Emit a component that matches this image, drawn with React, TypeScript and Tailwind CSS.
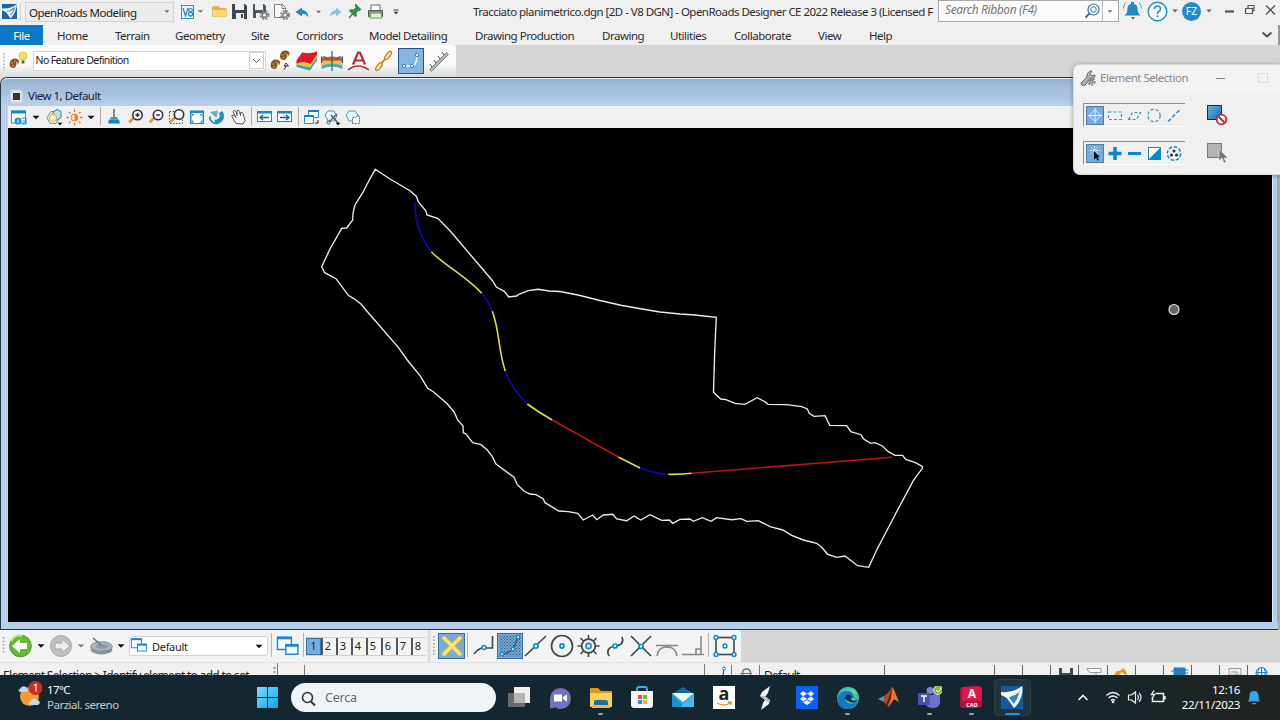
import type { ReactNode } from "react";

type IconProps = { x: number; y: number; w: number; h: number; children?: ReactNode; className?: string };

/* An icon slot: drawn in window coordinates, sized and placed by its flex row. */
function G({ x, y, w, h, children, className = "" }: IconProps) {
  return (
    <svg width={w} height={h} viewBox={`${x} ${y} ${w} ${h}`} fill="none" className={`block shrink-0 ${className}`}>
      {children}
    </svg>
  );
}

function Down({ x, y, s = 3, c = "#666" }: { x: number; y: number; s?: number; c?: string }) {
  return <path d={`M${x - s} ${y - s / 2}h${s * 2}l${-s} ${s}z`} fill={c} />;
}

function Gear({ x, y, r = 3 }: { x: number; y: number; r?: number }) {
  return (
    <g stroke="#7d8488">
      <circle cx={x} cy={y} r={r + 1} strokeWidth="2" strokeDasharray="2 1.2" />
      <circle cx={x} cy={y} r={r - 0.7} strokeWidth="1.6" fill="#f0f0f0" />
    </g>
  );
}

function TitleBar() {
  return (
    <div className="flex h-[25px] shrink-0 items-start bg-[#f0f0f0]">
      <G x={0} y={0} w={25} h={25}>
        <rect x="2" y="4" width="15" height="15" fill="#1a67a8" />
        <path d="M2 8.500q9 .5 15-4.500-1 9-6.500 14.500l-3-4.500q-1.500-3-5.500-3.500z" fill="#f6fafc" />
        <path d="M7 11.500q4-.5 8-4-2 5-4.500 7.500" stroke="#5596c4" strokeWidth="1.100" />
        <path d="M20.500 4v17" stroke="#d2d2d2" />
      </G>
      <div className="mt-[2px] flex h-[20px] w-[149px] shrink-0 items-center justify-between border border-[#d2d2d2] bg-[#ececec] pl-[3px] pr-[3px]">
        <span className="whitespace-nowrap pt-[1px] text-[11.5px] leading-[17px] tracking-[-0.52px] text-[#222]">OpenRoads Modeling</span>
        <G x={0} y={0} w={6} h={4}><Down x={3} y={1.5} s={2.5} /></G>
      </div>
      <G x={174} y={0} w={34} h={25}>
        <rect x="181.5" y="5.5" width="12" height="13" fill="#eaf6fd" stroke="#2e8fc4" />
        <path d="M183 8l2.500 8 2.500-8M190.500 8.500a1.800 1.800 0 0 1 0 3.600 2 2 0 0 1 0 4 2 2 0 0 1 0-4 1.800 1.800 0 0 1 0-3.600" stroke="#1687c7" strokeWidth="1.200" />
        <Down x={200.500} y={11.500} s={2.500} />
      </G>
      <G x={208} y={0} w={22} h={25}>
        <path d="M212 7.500q0-1.500 1.500-1.500h5l1.500 2h5q2 0 2 2v5q0 2-2 2h-11q-2 0-2-2z" fill="#e7b04c" />
        <path d="M212.500 10h14v4.500q0 2-2 2h-10q-2 0-2-2z" fill="#fbd879" />
      </G>
      <G x={230} y={0} w={20} h={25}>
        <path d="M232 4h13l2 2v13h-15z" fill="#41474c" />
        <path d="M235 4h9v6h-9zM236 13h8v6h-8z" fill="#edf0f2" />
        <path d="M241 14h2v4h-2z" fill="#41474c" />
      </G>
      <G x={250} y={0} w={21} h={25}>
        <path d="M253 4h11l2 2v12h-13z" fill="#50575c" />
        <path d="M255 4h8v6h-8zM256 13h6v5h-6z" fill="#edf0f2" />
        <Gear x={264.500} y={15} />
      </G>
      <G x={271} y={0} w={21} h={25}>
        <path d="M274.500 4.500h8l3 3v10h-11z" fill="#f7f7f7" stroke="#777e83" />
        <path d="M282 4.500v4h4" stroke="#777e83" />
        <Gear x={285} y={15} />
      </G>
      <G x={292} y={0} w={34} h={25}>
        <path d="M295.500 12l6.500-4.500v2.500q5.500 0 6.500 7-3-3.500-6.500-3.200v2.700z" fill="#2489c8" />
        <Down x={318.500} y={12} s={2.500} />
      </G>
      <G x={326} y={0} w={18} h={25}>
        <path d="M341.500 12l-5.500-4.500v2.500q-5 0-6 6.500 2.500-3 6-2.700v2.700z" fill="#8dc0de" />
      </G>
      <G x={344} y={0} w={20} h={25}>
        <path d="M355.500 4l5.500 5.500-1.500 1-1-.3-2.500 2.500.5 3-1.200 1-6-6 1.200-1 3 .3 2.300-2.500-.3-1z" fill="#2d9144" stroke="#2d9144" />
        <path d="M353 13.500l-4 4.500" stroke="#4c6a54" strokeWidth="1.200" />
      </G>
      <G x={364} y={0} w={22} h={25}>
        <path d="M371 5h9v6h-9z" fill="#fff" stroke="#666" />
        <path d="M368.500 10.500h14v6h-14z" fill="#8b9092" stroke="#54595c" />
        <path d="M371 13h10l1 5h-12z" fill="#dff0d0" stroke="#69a652" />
      </G>
      <G x={386} y={0} w={87} h={25}>
        <path d="M393.500 10h5" stroke="#333" />
        <Down x={396} y={13} s={2.500} c="#333" />
      </G>
      <span className="mt-[4px] w-[465px] shrink-0 whitespace-nowrap text-[11.5px] leading-[16px] tracking-[-0.53px] text-[#2b2b2b]">
        Tracciato planimetrico.dgn [2D - V8 DGN] - OpenRoads Designer CE 2022 Release 3 (Licensed F
      </span>
      <div className="flex h-[22px] w-[181px] shrink-0 items-start border border-[#a9a9a9] bg-[#fcfcfc]">
        <span className="w-[143px] shrink-0 whitespace-nowrap pl-[6px] text-[12px] italic leading-[17px] tracking-[-0.4px] text-[#777]">Search Ribbon (F4)</span>
        <G x={1082} y={1} w={37} h={20}>
          <circle cx="1093.500" cy="9.500" r="5.500" stroke="#33739a" strokeWidth="1.200" />
          <circle cx="1093.500" cy="9.500" r="2.800" stroke="#33739a" />
          <path d="M1089.500 13.500l-4 4" stroke="#33739a" strokeWidth="2" />
          <path d="M1102.500 0v22" stroke="#b9b9b9" />
          <Down x={1110} y={11.500} s={2.300} />
        </G>
      </div>
      <G x={1119} y={0} w={26} h={25}>
        <path d="M1124.500 15.500q3-2 3-7 0-4 3.500-4.500l0-2h3v2q3.500.500 3.500 4.500 0 5 3 7z" fill="#1f8bc3" />
        <path d="M1131 17h4l-2 3z" fill="#1f8bc3" />
        <path d="M1126 2.500q-2.500 2-2.500 6M1139 2.500q2.500 2 2.500 6" stroke="#4ba0cc" />
      </G>
      <G x={1145} y={0} w={35} h={25}>
        <circle cx="1157.500" cy="11.500" r="9.300" fill="#f5fafc" stroke="#258bbb" strokeWidth="1.400" />
        <path d="M1154.500 9q0-3 3-3t3 3q0 1.500-2 2.700-1 .700-1 2.300" stroke="#258bbb" strokeWidth="1.500" />
        <circle cx="1157.500" cy="16.300" r="1" fill="#258bbb" />
        <Down x={1175} y={11} s={2.800} />
      </G>
      <div className="ml-[2px] mt-[2px] flex h-[19px] w-[19px] shrink-0 items-center justify-center rounded-full bg-[#278bc5] text-[10.5px] text-white">FZ</div>
      <G x={1201} y={0} w={79} h={25}>
        <Down x={1209} y={11} s={2.800} />
        <path d="M1225 11.500h9" stroke="#555" strokeWidth="2.200" />
        <path d="M1245.500 8.500h7v5h-7zM1248 8V5.500h6v5h-2" stroke="#555" strokeWidth="1.200" />
        <path d="M1266 5.500l9 9M1275 5.500l-9 9" stroke="#555" strokeWidth="1.300" />
      </G>
    </div>
  );
}

function Ribbon() {
  const tab = "shrink-0 whitespace-nowrap pt-[1px]";
  return (
    <div className="flex h-[20px] shrink-0 items-center bg-[#f0f0f0] text-[11.5px] leading-[19px] tracking-[-0.48px] text-[#2b2b2b]">
      <span className="flex h-[20px] w-[43px] shrink-0 items-center justify-center bg-[#0c79c8] text-white">File</span>
      <span className={`${tab} ml-[14px] w-[58px]`}>Home</span>
      <span className={`${tab} w-[60px]`}>Terrain</span>
      <span className={`${tab} w-[76px]`}>Geometry</span>
      <span className={`${tab} w-[45px]`}>Site</span>
      <span className={`${tab} w-[73px]`}>Corridors</span>
      <span className={`${tab} w-[106px]`}>Model Detailing</span>
      <span className={`${tab} w-[127px]`}>Drawing Production</span>
      <span className={`${tab} w-[68px]`}>Drawing</span>
      <span className={`${tab} w-[64px]`}>Utilities</span>
      <span className={`${tab} w-[84px]`}>Collaborate</span>
      <span className={`${tab} w-[51px]`}>View</span>
      <span className={`${tab} w-[389px]`}>Help</span>
      <G x={1258} y={25} w={22} h={20}>
        <path d="M1262.500 32.500l4.500 4 4.500-4" stroke="#555" strokeWidth="2" />
        <path d="M1279 25v20" stroke="#999" strokeWidth="2" />
      </G>
    </div>
  );
}

function Palette({ x, y }: { x: number; y: number }) {
  return (
    <g>
      <path d={`M${x - 4.500} ${y + 2}q0-6 5-6.500 5 0 4.500 4-.500 2-3 2 0 4-3.500 3.500-2.500-.5-3-3z`} fill="#87512b" />
      <circle cx={x - 2} cy={y} r="1.300" fill="#48a848" />
      <circle cx={x + 1} cy={y - 2} r="1.300" fill="#e7542c" />
      <circle cx={x + 3} cy={y} r="1.200" fill="#edb72c" />
      <circle cx={x - 1} cy={y + 3} r="1.200" fill="#e0672e" />
    </g>
  );
}

function FeatureBar() {
  return (
    <div className="flex h-[32px] shrink-0 bg-[#d5d5d5]">
      <div className="flex h-[32px] w-[456px] shrink-0 items-start rounded-r-[3px] bg-linear-to-b from-[#fafafa] from-60% to-[#dadada]">
        <G x={0} y={45} w={33} h={32}>
          <path d="M4 53v18" stroke="#aaa" strokeWidth="1.500" strokeDasharray="1.500 2" />
          <Palette x={14} y={63} />
          <circle cx="23" cy="56" r="4" fill="#f7e647" stroke="#d0b83c" strokeWidth=".700" />
          <path d="M21.500 60.500h3v3h-3z" fill="#596061" />
        </G>
        <div className="mt-[6px] flex h-[20px] w-[233px] shrink-0 items-center justify-between border border-[#d7d7d7] bg-white pl-[1.500px]">
          <span className="whitespace-nowrap pb-[2px] text-[10.5px] leading-[16px] tracking-[-0.6px] text-[#222]">No Feature Definition</span>
          <G x={249} y={52} w={16} h={18}>
            <rect x="249.500" y="52.500" width="14" height="16" stroke="#cfcfcf" fill="#fff" />
            <path d="M253 59l3.500 3.500L260 59" stroke="#555" />
          </G>
        </div>
        <G x={266} y={45} w={28} h={32}>
          <Palette x={275} y={64} /><Palette x={284.500} y={55} />
          <path d="M283.500 69.500q2.500-.5 2.500-4M284 66l2-3 2.500 3z" stroke="#222" strokeWidth=".900" />
        </G>
        <G x={294} y={45} w={26} h={32}>
          <path d="M296.500 62.500l13.500 2.500 7-10v5.500l-7 10-13.500-3.500z" fill="#29aebb" />
          <path d="M296.500 61.500l13.500 2.500 7-10v3.500l-7 10-13.500-3z" fill="#f0c43a" />
          <path d="M302 52.500q8 2 15-1v3l-6.500 9.500q-7-3-14-.5v-3z" fill="#e01a22" />
        </G>
        <G x={320} y={45} w={26} h={32}>
          <path d="M321.500 59q10.500-4 21 0v10q-10.500-5-21 0z" fill="#3daec4" />
          <path d="M321.500 59q10.500-4 21 0v7q-10.500-5-21 0z" fill="#f3bc3b" />
          <path d="M321.500 58q10.500-3 21 0v3.500q-10.500-4-21 0z" fill="#e04d2b" />
          <path d="M332 51v20M321.500 63v-6h4l1.500 3h10l1.500-3h4v6" stroke="#3a5a78" strokeWidth="1.200" />
        </G>
        <G x={346} y={45} w={26} h={32}>
          <path d="M353 64.500l5-12h2l5 12M355.500 60.500h7" stroke="#bd2930" strokeWidth="2.200" />
          <path d="M348 70q10-8 21 0" stroke="#bd2930" strokeWidth="1.500" />
        </G>
        <G x={372} y={45} w={26} h={32}>
          <path d="M376 70l15-18" stroke="#b27a25" strokeWidth="1.600" />
          <g stroke="#c3862c" strokeWidth="1.400" fill="#fae6a9"><ellipse cx="379" cy="66.500" rx="4.700" ry="1.900" transform="rotate(-52 379 66.500)" /><ellipse cx="388" cy="55.500" rx="5" ry="1.900" transform="rotate(-52 388 55.500)" /></g>
        </G>
        <G x={398} y={45} w={58} h={32}>
          <rect x="398.500" y="48.500" width="25" height="25" fill="#83b6e3" stroke="#24528a" />
          <path d="M404 66h8q5-1 5-11" stroke="#eaf7fc" strokeWidth="1.500" />
          <g fill="#dff4fa" stroke="#4082af"><circle cx="404" cy="66" r="1.700" /><circle cx="412" cy="66" r="1.700" /><circle cx="417" cy="55" r="1.700" /></g>
          <path d="M429.500 69.500l17-17 2 2-17 17z" fill="#b4b7b9" stroke="#7b8082" />
          <path d="M432 67l-2-3m6-1-2-3m6-1-2-3m6-1-2-3" stroke="#555" />
        </G>
      </div>
    </div>
  );
}

const OUTLINE =
  "375.3,169.3 390,179 410,190.7 416.5,196.5 418.3,201.7 426,211 427,215 437.7,218.3 450,230.7 492.7,281 496.3,287 504.3,291.3 508.7,297 516.7,296 519.3,294 528.3,290.7 538,289.3 549.3,291 560,291.5 578,295 600,300.5 622,305.5 645,309.5 660,312 680,314 695,315 716.3,317.3 714.7,351.7 713.5,392.3 720.7,399 726,399.7 735,403.3 745,404.3 757,397.7 765,401.7 768,404.3 786.7,404.7 801.7,406.7 807.3,409 809.3,413.3 814,416.3 825,415.7 829.7,425.3 846.7,425.7 850.7,431.7 861,434.7 863.3,438.7 870.7,443.3 875,442.7 882,445.7 888.3,451.7 895,455.3 902.7,455.3 905.7,459.3 915,462.3 922.3,466.3 922.3,468.3 913.3,480.7 896.7,511.7 876.7,550 868.7,567.3 857.7,565.7 845,556 836.7,557.3 827.7,554.3 821.7,547.3 816.7,543.3 803.3,540 791.7,535.3 782.7,530 770,526.7 758.3,520.7 746.7,521.3 741,518.7 731.7,519.7 716.7,517.7 711,521.3 702.3,517.7 693.3,521.3 690,519 680,519.3 672.7,523.3 669.3,520 661.7,520.3 650,514.7 640.7,520 634,516 626.7,520.7 616.7,519 612.7,514.3 603.3,515 596.7,519.7 592.7,515 583.3,520 577.7,513.3 568.3,511.7 558.7,511 545,502.7 543.3,499 536,494.7 530,494 524.3,491.3 517.3,484.7 514,477.3 496,464 492.3,456.7 487.3,450 481,444.7 472.7,442.7 466,434 463.3,432.7 463,426 457.7,420 454,411.7 446.7,403.3 433.3,391.7 427.7,388.3 420,375.7 407.3,360 398.3,347.3 368.3,312.7 361,304 353.3,298.3 348.3,295.3 336,278.7 324.7,272.7 321.7,266.7 330,249 341.7,228.3 346.7,228 352.7,220 353,213.3 355,205 362.7,192.7 369.3,180";

function Drawing() {
  return (
    <G x={8} y={128} w={1264} h={494} className="bg-black">
      <polygon points={OUTLINE} stroke="#ececec" strokeWidth="1.350" />
      <g strokeWidth="1.600">
        <path d="M415 202.300Q414.500 230 430.700 251M481.700 293.300Q488 300 492.300 311.300M505.300 371Q511 388 527.300 404M640 468Q652 473 668.300 474.300" stroke="#0a0ab0" />
        <path d="M431.300 251.700C445 266 466 276 481.700 293.300M492.300 311.300C500 332 498 350 505.300 371M527.300 404Q538 412 552.300 420M618.300 457L640 468M668.300 474.300Q681 474.500 691.700 473.300" stroke="#dede45" />
        <path d="M552.300 420L618.300 457M691.700 473.300L892 457.200" stroke="#b91418" />
      </g>
      <circle cx="1174" cy="309.500" r="5" fill="#666" stroke="#ddd" strokeWidth="1.200" />
    </G>
  );
}

function Lens({ x, y, sign }: { x: number; y: number; sign?: string }) {
  return (
    <g>
      <path d={`M${x - 4} ${y + 3}l-4.500 4.500`} stroke="#d59b35" strokeWidth="2.500" />
      <circle cx={x} cy={y} r="4.700" fill="#f1faff" stroke="#333" strokeWidth="1.600" />
      {sign && <path d={sign === "+" ? `M${x - 2} ${y}h4M${x} ${y - 2}v4` : `M${x - 2} ${y}h4`} stroke="#222" strokeWidth="1.300" />}
    </g>
  );
}

function ViewBar() {
  return (
    <div className="flex h-[22px] shrink-0 bg-[#f0f0f0]">
      <G x={8} y={106} w={36} h={22}>
        <rect x="11.500" y="111" width="14" height="12" fill="#f8fdff" stroke="#2795cf" />
        <path d="M11 112h15" stroke="#178ccd" strokeWidth="3" />
        <circle cx="18" cy="121" r="3.500" fill="#2690c5" /><path d="M18 119.500v3.500" stroke="#fff" /><path d="M21.500 118h4.500v6h-4.500M22.500 121h3" stroke="#2690c5" />
        <Down x={36} y={117.500} s={3.500} c="#111" />
      </G>
      <G x={44} y={106} w={21} h={22}>
        <path d="M47 117.500l4-6h6l3 5-4 7h-6z" fill="#e8f1d6" stroke="#6aa47c" />
        <path d="M53 112l4-2.500 4 2v6l-4 2.500-4-2z" fill="#b8def0" stroke="#3082ae" />
        <circle cx="53" cy="118" r="3.500" fill="#fff4cb" stroke="#dcaa45" /><Down x={60} y={124} s={2.500} c="#111" />
      </G>
      <G x={65} y={106} w={37} h={22}>
        <circle cx="74.500" cy="117.500" r="3.500" fill="#ffe9b0" stroke="#d98a25" /><path d="M74.500 114a3.500 3.500 0 0 1 0 7z" fill="#ef8330" />
        <path d="M74.500 109.500v2.500M74.500 123v2.500M66.500 117.500h2.500M80 117.500h2.500M69 112l1.500 1.500M79 121.500l1.500 1.500M69 123l1.500-1.500M79 113.500l1.500-1.500" stroke="#cd7e2c" strokeWidth="1.300" />
        <Down x={91} y={117.500} s={3.500} c="#111" /><path d="M100.500 107v19" stroke="#aaa" />
      </G>
      <G x={102} y={106} w={24} h={22}>
        <path d="M114 109v8" stroke="#4d6a7a" strokeWidth="1.500" /><path d="M110.500 117h7v2.500h-7z" fill="#568eae" /><path d="M109 119.500h10l1 4h-12z" fill="#1684c3" />
      </G>
      <G x={126} y={106} w={20} h={22}><Lens x={137.500} y={115} sign="+" /></G>
      <G x={146} y={106} w={20} h={22}><Lens x={158} y={115} sign="-" /></G>
      <G x={166} y={106} w={21} h={22}><rect x="169.500" y="111.500" width="13" height="12" stroke="#555" strokeDasharray="1.500 1.500" /><Lens x={179} y={114.500} /></G>
      <G x={187} y={106} w={20} h={22}>
        <rect x="190" y="110.500" width="14" height="13.500" fill="#168bc9" /><path d="M191.500 113h11v10h-11z" fill="#fff" />
        <path d="M192 114l2.500 0-2.500 2.500zM202 114l-2.500 0 2.500 2.500zM192 122.500l2.500 0-2.500-2.500zM202 122.500l-2.500 0 2.500-2.500z" fill="#2b93c9" />
      </G>
      <G x={207} y={106} w={21} h={22}>
        <path d="M211 116q-1 5 4 6.500l-.5-3q2 .5 3.500-.5 3-2 1-6l3-2q3.500 4 1 9-3 5-9 4-5-2-5-7z" fill="#2b8dc2" /><path d="M210 112l8-1.500-1.500 7.500z" fill="#5cb2dd" />
      </G>
      <G x={228} y={106} w={25} h={22}>
        <path d="M236 123.500l-4-7q-1-2 2-1l2 2-3-6q1-2 3 0l1 4v-5q2-1 2.500 1l1 4v-3q2-1 2.500 1l2 7-2 3.500z" fill="#f8f8f8" stroke="#555" /><path d="M251.500 107v19" stroke="#aaa" />
      </G>
      <G x={253} y={106} w={22} h={22}>
        <rect x="257.500" y="111.500" width="14" height="10" fill="#f8fdff" stroke="#2088ba" /><path d="M257 112.500h15" stroke="#178ac6" strokeWidth="2" /><path d="M269 117.500h-8M263 115l-3 2.500 3 2.500" stroke="#18648d" strokeWidth="1.300" />
      </G>
      <G x={275} y={106} w={25} h={22}>
        <rect x="277.500" y="111.500" width="14" height="10" fill="#f8fdff" stroke="#2088ba" /><path d="M277 112.500h15" stroke="#178ac6" strokeWidth="2" /><path d="M280 117.500h8M286 115l3 2.500-3 2.500" stroke="#18648d" strokeWidth="1.300" /><path d="M298.500 107v19" stroke="#aaa" />
      </G>
      <G x={300} y={106} w={22} h={22}>
        <g fill="#f8fdff" stroke="#228fc5"><path d="M308.500 110.500h10v7h-10z" /><path d="M304.500 115.500h9v8h-9z" /></g><path d="M308 111h11M304 116h10" stroke="#1580ba" strokeWidth="2" /><path d="M315 123h3v-3" stroke="#222" />
      </G>
      <G x={322} y={106} w={21} h={22}>
        <path d="M325 115l3-4h6l3 5-3 5h-6z" fill="#e9f8ff" stroke="#3b98c9" /><path d="M329 122l8-8M331 115l7 8" stroke="#555" strokeWidth="1.300" /><circle cx="328.500" cy="122.500" r="1.500" stroke="#555" /><Down x={338} y={124} s={2.500} c="#111" />
      </G>
      <G x={343} y={106} w={25} h={22}>
        <path d="M346 115l3-4h6l3 4-3 6h-6z" fill="#e9f8ff" stroke="#3b98c9" /><path d="M352.500 123.500v-6h3l1.500-1.500h2.500v7.500z" fill="#f5f5f5" stroke="#666" strokeDasharray="2 1" />
      </G>
    </div>
  );
}

function ViewWindow() {
  return (
    <div className="flex h-[553px] shrink-0 bg-[#d5d5d5]">
      <div className="flex w-[1278px] flex-col rounded-tl-[7px] border-y border-l border-[#263640] bg-[#b7cfeb]">
        <div className="flex h-[28px] shrink-0 items-center rounded-tl-[6px] border-t border-[#e4f0fa] bg-linear-to-b from-[#97b3d2] to-[#b9cfeb] pt-[6px]">
          <G x={1} y={86} w={27} h={18}>
            <rect x="10.500" y="89" width="12" height="13" rx="2" fill="#dce4ea" stroke="#c1cfda" /><rect x="13" y="92" width="7" height="7" fill="#333" />
          </G>
          <span className="whitespace-nowrap text-[11.5px] leading-[18px] tracking-[-0.52px] text-[#18202a]">View 1, Default</span>
        </div>
        <div className="flex shrink-0 pl-[7px]">
          <div className="flex w-[1264px] shrink-0 flex-col"><ViewBar /><Drawing /></div>
          <div className="w-[6px] border-x border-l-[#e1eef4] border-r-[#63b4e8] bg-[#aacfe6]" />
        </div>
      </div>
      <div className="w-[2px] bg-[#aaa9a5]" />
    </div>
  );
}

function TwoWindows({ x, y, s }: { x: number; y: number; s: number }) {
  return (
    <g transform={`translate(${x} ${y}) scale(${s})`}>
      <path d="M.5.5h15v13H.5z" fill="#f8fcfe" stroke="#238bc1" strokeWidth="1.500" /><path d="M0 1h16" stroke="#168bca" strokeWidth="3" />
      <path d="M9.500 8.500h13v10h-13z" fill="#f8fcfe" stroke="#238bc1" strokeWidth="1.500" /><path d="M9 9h14" stroke="#168bca" strokeWidth="3" />
    </g>
  );
}

function BottomBar() {
  return (
    <div className="flex h-[32px] shrink-0 bg-[#d5d5d5]">
      <div className="flex w-[741px] shrink-0 items-center rounded-r-[3px] bg-[#f3f3f3]">
        <G x={0} y={630} w={46} h={32}>
          <path d="M3.500 637v17" stroke="#999" strokeWidth="1.500" strokeDasharray="1.500 2" />
          <circle cx="20.500" cy="646" r="10.800" fill="#63bd31" stroke="#4c972d" /><path d="M11 641q4-7 11-5" stroke="#bbe890" strokeWidth="2" /><path d="M12 646l8-7v4h7v6h-7v4z" fill="white" />
          <Down x={41} y={646} s={3.500} c="#111" />
        </G>
        <G x={46} y={630} w={41} h={32}>
          <circle cx="61" cy="646" r="10.500" fill="#c0c0c0" stroke="#a8a8a8" /><path d="M70 646l-8-7v4h-7v6h7v4z" fill="#eee" stroke="#a7a7a7" />
          <Down x={81} y={646} s={3.200} c="#777" />
        </G>
        <G x={87} y={630} w={42} h={32}>
          <ellipse cx="101.500" cy="649.500" rx="11" ry="5" fill="#8a9299" /><ellipse cx="101.500" cy="646.500" rx="10.800" ry="4.700" fill="#aeb5bc" stroke="#828c94" /><ellipse cx="102" cy="646.500" rx="6" ry="2.300" fill="#8f99a1" /><path d="M101 645l-8-7" stroke="#69737b" strokeWidth="1.600" />
          <Down x={121} y={646} s={3.500} c="#111" />
        </G>
        <div className="flex h-[20px] w-[139px] shrink-0 items-center rounded-[3px] border border-[#d2d2d2] bg-white">
          <G x={130} y={637} w={21} h={18}><TwoWindows x={131} y={638.500} s={.680} /></G>
          <span className="w-[103px] pl-[1px] pt-[1px] text-[11px] leading-[17px] tracking-[-0.3px] text-[#222]">Default</span>
          <G x={254} y={637} w={12} h={18}><Down x={259} y={646.500} s={3.500} c="#111" /></G>
        </div>
        <G x={268} y={630} w={38} h={32}><path d="M271.500 633v24M303.500 633v24" stroke="#b3b3b3" /><TwoWindows x={277} y={637} s={.930} /></G>
        <div className="flex h-[19px] w-[120px] shrink-0 border-y border-[#d0d0d0] text-[11px] leading-[16px] text-[#222]">
          {[1, 2, 3, 4, 5, 6, 7, 8].map((n) => (
            <span key={n} className={n === 1 ? "flex w-[15px] justify-center border border-[#386fa6] bg-[#76ace3] leading-[14px]" : "flex w-[15px] justify-center border-l-2 border-[#555] pr-[3px]"}>{n}</span>
          ))}
        </div>
        <G x={426} y={630} w={44} h={32}>
          <path d="M429 630v32" stroke="#dedede" strokeWidth="3" /><path d="M434 636v19" stroke="#999" strokeWidth="1.500" strokeDasharray="1.500 2" />
          <rect x="438.500" y="633.500" width="26" height="25" fill="#78acd4" stroke="#376ca5" /><path d="M443 637l18 18M461 637l-18 18" stroke="#d9b84b" strokeWidth="5" /><path d="M443 637l18 18M461 637l-18 18" stroke="#ffe37e" strokeWidth="3" /><path d="M467.500 633v24" stroke="#b3b3b3" />
        </G>
        <G x={470} y={630} w={27} h={32}>
          <path d="M474 654q4-5 8-6h10.500v-12" stroke="#3c464e" strokeWidth="1.600" /><circle cx="484" cy="647.500" r="2" fill="#eaf7fc" stroke="#168bc8" strokeWidth="1.600" />
        </G>
        <G x={497} y={630} w={27} h={32}>
          <defs><pattern id="dots" width="3" height="3" patternUnits="userSpaceOnUse"><path d="M0 0h1v1H0zM1.500 1.500h1v1h-1z" fill="#31536e" /></pattern></defs>
          <rect x="497.500" y="633.500" width="25" height="25" fill="#76a9d4" stroke="#376ca5" /><rect x="499" y="635" width="22" height="22" fill="url(#dots)" />
          <path d="M502 655l11-5 5-13" stroke="#2c5f85" strokeWidth="1.500" /><g stroke="#168bc8" fill="#dff4fc" strokeWidth="1.400"><circle cx="502" cy="654" r="1.700" /><circle cx="513" cy="649" r="1.700" /><circle cx="518" cy="637" r="1.700" /></g>
        </G>
        <G x={524} y={630} w={25} h={32}><path d="M525 656l21-20" stroke="#3c464e" strokeWidth="1.600" /><circle cx="536" cy="646" r="2.200" fill="#eaf7fc" stroke="#168bc8" strokeWidth="1.700" /></G>
        <G x={549} y={630} w={26} h={32}><circle cx="562" cy="646" r="10.500" stroke="#3c464e" strokeWidth="1.700" /><circle cx="562" cy="646" r="2" stroke="#168bc8" strokeWidth="1.800" fill="#fff" /></G>
        <G x={575} y={630} w={27} h={32}>
          <circle cx="588.500" cy="646" r="6.800" stroke="#3c464e" strokeWidth="1.700" /><path d="M588.500 635v4M588.500 653v4M577.500 646h4M595.500 646h4M580.500 638l3 3M593.500 651l3 3M596.500 638l-3 3M583.500 651l-3 3" stroke="#3c464e" strokeWidth="1.600" /><circle cx="588.500" cy="646" r="2.600" stroke="#168bc8" strokeWidth="1.600" fill="#e8f7fc" />
        </G>
        <G x={602} y={630} w={26} h={32}><path d="M609 656q-4-8 6-10 10-1 7-9" stroke="#3c464e" strokeWidth="1.700" /><circle cx="615" cy="646" r="2" fill="#eaf7fc" stroke="#168bc8" strokeWidth="1.700" /></G>
        <G x={628} y={630} w={26} h={32}><path d="M631 636l20 20M651 636l-20 20" stroke="#3c464e" strokeWidth="1.700" /><circle cx="641" cy="646.500" r="2" fill="#eaf7fc" stroke="#168bc8" strokeWidth="1.700" /></G>
        <G x={654} y={630} w={26} h={32}><path d="M656 645.500h22M657 656q1-9 10-9t10 9" stroke="#858585" strokeWidth="1.500" /></G>
        <G x={680} y={630} w={31} h={32}><path d="M682 654.500h22M701 654v-18M696 654v-5h5" stroke="#858585" strokeWidth="1.500" /><path d="M708.500 633v24" stroke="#b3b3b3" /></G>
        <G x={711} y={630} w={29} h={32}>
          <rect x="716" y="637.500" width="18" height="17" stroke="#3c464e" strokeWidth="1.600" /><g fill="#eaf7fc" stroke="#168bc8" strokeWidth="1.500"><circle cx="716" cy="637.500" r="1.900" /><circle cx="734" cy="637.500" r="1.900" /><circle cx="716" cy="654.500" r="1.900" /><circle cx="734" cy="654.500" r="1.900" /><circle cx="725" cy="646" r="1.900" /></g>
        </G>
      </div>
    </div>
  );
}

function StatusBar() {
  return (
    <div className="flex h-[13px] shrink-0 items-start overflow-hidden border-t border-[#e2e2e2] bg-[#f0f0f0] text-[12px] leading-[16px] text-[#222]">
      <span className="mt-[5px] w-[268px] shrink-0 whitespace-nowrap pl-[3px] tracking-[-0.69px]">Element Selection &gt; Identify element to add to set</span>
      <G x={268} y={663} w={495} h={12}>
        <path d="M274.500 667v8" stroke="#999" strokeDasharray="2 2" strokeWidth="2" /><path d="M277.500 663v12M304.500 665v10M704.500 664v11M731.500 665v10M759.500 665v10" stroke="#777" />
        <path d="M723 675l1-6" stroke="#333" /><circle cx="724" cy="668.500" r="1.500" stroke="#168bc8" fill="#fff" />
        <path d="M742.500 675v-2q0-4 4-4t4 4v2" stroke="#777" strokeWidth="1.500" /><path d="M740 673.500h12" stroke="#777" />
      </G>
      <span className="mt-[5px] w-[117px] shrink-0 pl-[1px] tracking-[-0.8px]">Default</span>
      <G x={880} y={663} w={400} h={12}>
        <path d="M884.500 665v10M994.500 665v10M1022.500 665v10M1050.500 665v10M1078.500 665v10M1107.500 665v10M1135.500 665v10M1163.500 665v10M1191.500 665v10M1219.500 665v10M1247.500 665v10" stroke="#666" />
        <path d="M1059 668h14v7h-14z" fill="#41494e" /><path d="M1062 668h8v5h-8z" fill="#eee" />
        <path d="M1087 668.500h14v4h-11l-2-2zM1096 672v3" fill="#fff" stroke="#999" />
        <path d="M1114 675l3-4h3l3-3 3 3 1 4-3-1-2-2-3 3z" fill="#e49622" />
        <path d="M1174 668h11v7h-11zM1171 671h3M1185 670h3M1185 673h3" fill="#2180bd" stroke="#2180bd" />
        <path d="M1229 668.500h12v6.500h-12zM1231 672h6v3" fill="#eee" stroke="#999" />
        <circle cx="1261.500" cy="673" r="5.500" fill="#e1f3ff" stroke="#277eb7" /><path d="M1261.500 667v8M1256 672.500h11M1259 668q-2 4-1 7M1264 668q2 4 1 7" stroke="#277eb7" />
      </G>
    </div>
  );
}

function AppIcon({ children, running = false, active = false }: { children: ReactNode; running?: boolean; active?: boolean }) {
  return (
    <div className="flex w-[41.15px] shrink-0 flex-col items-center">
      <div className={active ? "flex h-[37px] w-[37px] items-center justify-center rounded-[4px] border border-[#29404b] bg-[#20343f]" : "flex h-[37px] w-[37px] items-center justify-center"}>
        <svg width="24" height="24" viewBox="0 0 24 24" fill="none">{children}</svg>
      </div>
      {active ? <div className="-mt-[3px] h-[2px] w-[15px] rounded-full bg-[#278ed7]" /> : running ? <div className="-mt-[3px] h-[2px] w-[5px] rounded-full bg-[#9ba5aa]" /> : null}
    </div>
  );
}

function Taskbar() {
  return (
    <div className="flex h-[45px] shrink-0 items-start bg-linear-to-r from-[#14262f] from-80% to-[#202321] text-white">
      <G x={0} y={675} w={47} h={45}>
        <circle cx="29.500" cy="696.500" r="9.500" fill="#f59b2b" /><path d="M20 692h7a4 4 0 0 0-1-5q-4-2-6 2-3 1 0 3M31 705h7q3-2 1-4-1-1-2-1-2-3-5-1-1 2-3 3-1 2 2 3" fill="#c5d5ef" />
        <circle cx="35.500" cy="688" r="7" fill="#c63029" /><path d="M34 685.500l2-1.200v7.200" stroke="#fff" strokeWidth="1.200" />
      </G>
      <div className="mt-[7px] flex w-[208px] shrink-0 flex-col text-[11.5px] leading-[15px]"><span className="tracking-[-0.6px]">17°C</span><span className="tracking-[-0.5px] text-[#c4cbce]">Parzial. sereno</span></div>
      <G x={255} y={675} w={36} h={45}>
        <defs><linearGradient id="win" x2="1" y2="1"><stop stopColor="#79e0fd" /><stop offset="1" stopColor="#13a0eb" /></linearGradient></defs>
        <path d="M257 687h10v10h-10zM268 687h10v10h-10zM257 698h10v10h-10zM268 698h10v10h-10z" fill="url(#win)" />
      </G>
      <div className="mt-[8px] flex h-[29px] w-[205px] shrink-0 items-center rounded-full bg-[#f0f4f7]">
        <G x={291} y={683} w={34} h={28}><circle cx="307.500" cy="696.500" r="5" stroke="#333" strokeWidth="1.600" /><path d="M311 700.500l4 4" stroke="#333" strokeWidth="2" /></G>
        <span className="pt-[2px] text-[12.5px] tracking-[-0.2px] text-[#606a72]">Cerca</span>
      </div>
      <div className="ml-[2px] mt-[4px] flex w-[535px] shrink-0">
        <AppIcon><path d="M7 1h16v16H7z" fill="#eee" /><path d="M1 7h17v14H1z" fill="#777" fillOpacity=".850" /><path d="M7 7h11v10H7z" fill="#b5b5b5" /></AppIcon>
        <AppIcon><path d="M2 22.500v-10A10.500 10.500 0 1 1 12.500 23q-3 0-5-1.500z" fill="#7571bb" /><path d="M6 8.500h8v7H6zM15 11l4-2.500v7L15 13z" fill="white" /></AppIcon>
        <AppIcon running><path d="M1 2h8l3 3h11v16H1z" fill="#d99924" /><path d="M1 7h22v14H1z" fill="#fbd15b" /><path d="M5 21v-5q0-2 2-2h10q2 0 2 2v5z" fill="#1c6da9" /><path d="M3 19h18v3H3z" fill="#edbb42" /></AppIcon>
        <AppIcon><path d="M7 7V3q0-2 2-2h6q2 0 2 2v4" stroke="#40aedd" strokeWidth="1.800" /><path d="M1 5h22v14q0 3-3 3H4q-3 0-3-3z" fill="#f4f4f4" /><path d="M8 9h4v4H8z" fill="#f14d2e" /><path d="M13 9h4v4h-4z" fill="#7bb62b" /><path d="M8 14h4v4H8z" fill="#199bd8" /><path d="M13 14h4v4h-4z" fill="#f0b522" /></AppIcon>
        <AppIcon><path d="M1 8l11-7 11 7v13H1z" fill="#1765ae" /><path d="M1 8h22v13H1z" fill="#31aeea" /><path d="M1 7h22l-11 9z" fill="#eef8fc" /><path d="M1 8l13 13H1z" fill="#1d8cd1" /><path d="M23 8L9 21h14z" fill="#44bbef" /></AppIcon>
        <AppIcon><path d="M1 0h22v23H1z" fill="#fff" /><text x="12" y="14" textAnchor="middle" fontSize="18" fontWeight="700" fill="#222">a</text><path d="M5 17q7 4 13 0M16 16h3v3" stroke="#df9128" strokeWidth="1.400" /></AppIcon>
        <AppIcon><path d="M17 0l-2 7-3 4 5 3-1 4-8 6 2-7 2-3-5-4 2-4z" fill="#f4f4f4" /><path d="M12 10l5 4-1 3-9-7z" fill="#b8c1c3" /></AppIcon>
        <AppIcon><path d="M1 0h22v23H1z" fill="#0860fb" /><path d="M8 5l4 2.700-4 2.600-3-2.600zM16 5l3 2.700-3 2.600-4-2.600zM8 10.300l4 2.700-4 2.600-3-2.600zM16 10.300l3 2.700-3 2.600-4-2.600zM12 14l4 2.500-4 2.500-4-2.500z" fill="#f2f7ff" /></AppIcon>
        <AppIcon running><defs><linearGradient id="edge" x2="1" y2="1"><stop stopColor="#25a9d4" /><stop offset=".5" stopColor="#5dda91" /><stop offset="1" stopColor="#1487c3" /></linearGradient></defs><circle cx="12" cy="12" r="11" fill="url(#edge)" /><path d="M1 12q3-8 11-7 6 1 6 7H9q0 5 7 6l5-2q-4 8-12 7-8-2-8-11" fill="#1777bd" /><path d="M9 12q1-4 5-3 3 1 1 4 1 3 7 1-4 5-10 1-3-1-3-3" fill="#14304b" /></AppIcon>
        <AppIcon><path d="M1 13l6-3 4 3-4 3z" fill="#4f9bb5" /><path d="M7 10l4-3 4-6 2 2 5 13-5-3-6 8-4-5z" fill="#b94422" /><path d="M15 1l-1 12-4 8-1-2 3-8z" fill="#5c2015" /><path d="M15.500 1l2 5 4.500 10-5-3-4 6-2 2 3-8z" fill="#e8752c" /></AppIcon>
        <AppIcon running><circle cx="12" cy="4.500" r="3.500" fill="#7b83dd" /><circle cx="18" cy="8" r="3" fill="#626bc7" /><path d="M7 9h15v8q-1 5-7 5-7 0-8-6z" fill="#6973cf" /><path d="M0 7h12v12H0z" fill="#4b51af" /><path d="M3 10h6M6 10v6" stroke="white" strokeWidth="1.500" /><circle cx="20" cy="4" r="4.500" fill="#87bb35" stroke="#dce9ca" /><path d="M18 4l2 2 3-4" stroke="white" /></AppIcon>
        <AppIcon running><path d="M3 1l17-1 3 2v18l-4 2H3L1 20V3z" fill="#df1748" /><path d="M3 14.500h20v6l-4 1.500H3z" fill="#b3123c" /><path d="M1 20V3l2-2v21" fill="#9b153a" /><text x="13" y="12" textAnchor="middle" fontSize="12" fontWeight="700" fill="#fff">A</text><text x="13" y="20.500" textAnchor="middle" fontSize="5.500" fontWeight="700" fill="#fff">CAD</text></AppIcon>
        <AppIcon active><path d="M1 0h22v23H1z" fill="#145b9a" /><path d="M1 6q13 1 21-6 1 3 0 8-2 9-8 14l-5-7q-2-4-8-6z" fill="#f6fafc" /><path d="M9 11q6-1 11-6-2 8-6.500 13z" fill="#3d84bd" /><path d="M9.500 10q6-1 11-6-2 9-6 14.500" stroke="#dcebf5" strokeWidth="1.600" strokeDasharray="2.500 1.500" /></AppIcon>
      </div>
      <G x={1033} y={675} w={139} h={45}>
        <path d="M1078.500 700l4.500-4.500 4.500 4.500" stroke="#eee" strokeWidth="1.600" />
        <path d="M1106.500 695.500q6.500-6 13 0M1108.500 698q4.500-4 9 0M1111 700.500q2-2 4 0" stroke="#eee" strokeWidth="1.300" /><circle cx="1113" cy="702" r="1.300" fill="#eee" />
        <path d="M1128.500 695h3l4-3v11l-4-3h-3zM1137.500 695q2 2 0 5M1139 693q4 4 0 9" stroke="#eee" strokeWidth="1.200" />
        <path d="M1152.500 693.500h11v8h-11zM1165 696v3.500" stroke="#eee" strokeWidth="1.500" /><path d="M1150.500 691h5v6h-5z" fill="#14262f" /><path d="M1154 690.500l-2.500 4h3l-2.500 4" stroke="#eee" strokeWidth="1.400" />
      </G>
      <div className="mt-[7px] flex w-[68px] shrink-0 flex-col items-end text-[11.5px] leading-[15px] tracking-[-0.3px]"><span>12:16</span><span>22/11/2023</span></div>
      <G x={1240} y={675} w={40} h={45}><path d="M1247.500 701.500q2-1 2-5.500 0-5 4.500-5t4.500 5q0 4.500 2 5.500z" fill="#35a8ed" /><path d="M1251.500 703h5q-2.500 3-5 0" fill="#35a8ed" /></G>
    </div>
  );
}

function SelectionPanel() {
  return (
    <div className="absolute left-[1073px] top-[64px] flex h-[111px] w-[207px] flex-col overflow-hidden rounded-l-[7px] border border-r-0 border-[#d7d7d7] bg-[#f0f0f0] shadow-[0_1px_5px_rgba(0,0,0,0.35)]">
      <div className="flex h-[27px] shrink-0 items-center bg-[#f3f3f3]">
        <G x={1074} y={65} w={26} h={26}>
          <path d="M1081 82l6-6q-1-4 3-6l2 0-2 3 2 2 3-1q0 4-5 4.500l-5 5.500q-4 2-4-2" fill="#aeb2b6" stroke="#656a6f" /><Gear x={1091.500} y={80.500} r={2.200} />
        </G>
        <span className="w-[113px] shrink-0 whitespace-nowrap pb-[2px] text-[11.5px] leading-[16px] tracking-[-0.48px] text-[#8a8a8a]">Element Selection</span>
        <G x={1213} y={65} w={67} h={26}><path d="M1216 77.500h9" stroke="#888" /><rect x="1258.500" y="72.500" width="9" height="9" stroke="#dcdcdc" /></G>
      </div>
      <div className="ml-[9px] mt-[11px] flex h-[24px] shrink-0 items-center">
        <div className="flex h-[24px] w-[102px] shrink-0 border-b border-l border-t border-b-white border-l-[#8b8b8b] border-t-[#8b8b8b]">
          <G x={1084} y={104} w={22} h={22}><rect x="1086.500" y="106.500" width="17" height="18" fill="#75ace0" stroke="#527ca5" /><path d="M1095 109.500l6 6-6 6-6-6zM1095 108v15M1088 115.500h14" stroke="#def4ff" /></G>
          <G x={1106} y={104} w={19} h={22}><rect x="1108.500" y="112" width="13" height="7.500" stroke="#3e91b6" strokeDasharray="3 2" strokeWidth="1.200" /></G>
          <G x={1125} y={104} w={19} h={22}><path d="M1128.500 119.500l4-7h8l-4 7z" stroke="#3e91b6" strokeDasharray="3 2" strokeWidth="1.200" /></G>
          <G x={1144} y={104} w={20} h={22}><circle cx="1154" cy="115.500" r="6.200" stroke="#3e91b6" strokeDasharray="3 2" strokeWidth="1.200" /></G>
          <G x={1164} y={104} w={20} h={22}><path d="M1168 121.500l12-12" stroke="#2c8bb9" strokeDasharray="4 2" strokeWidth="1.500" /></G>
        </div>
        <G x={1185} y={103} w={94} h={25}><defs><linearGradient id="sel" x2="1" y2="1"><stop stopColor="#66b9e4" /><stop offset="1" stopColor="#136aa6" /></linearGradient></defs><rect x="1207.500" y="105.500" width="14" height="14" fill="url(#sel)" stroke="#222b31" /><circle cx="1221.500" cy="119.500" r="4.800" fill="#fff" stroke="#c9232b" strokeWidth="1.800" /><path d="M1218.500 116.500l6 6" stroke="#c9232b" strokeWidth="2" /></G>
      </div>
      <div className="ml-[9px] mt-[14px] flex h-[24px] shrink-0 items-center">
        <div className="flex h-[24px] w-[102px] shrink-0 border-b border-l border-t border-b-white border-l-[#8b8b8b] border-t-[#8b8b8b]">
          <G x={1084} y={142} w={22} h={22}><rect x="1086.500" y="144.500" width="17" height="18" fill="#75ace0" stroke="#527ca5" /><path d="M1094.500 146v9M1090 150.500h10M1091 147l7 7M1098 147l-7 7" stroke="#def4ff" strokeDasharray="2 1" /><path d="M1094 151l6 6-2.500 0 1.500 3-1.500.8-1.500-3-2 2z" fill="#111" /></G>
          <G x={1106} y={142} w={19} h={22}><path d="M1115 147v13M1108.500 153.500h13" stroke="#0788d2" strokeWidth="3.500" /></G>
          <G x={1125} y={142} w={19} h={22}><path d="M1128 153.500h13" stroke="#0788d2" strokeWidth="3.200" /></G>
          <G x={1144} y={142} w={20} h={22}><rect x="1148.500" y="147.500" width="12" height="12" fill="#fff" stroke="#1686c5" /><path d="M1161 147v13h-13z" fill="#0788d2" /></G>
          <G x={1164} y={142} w={20} h={22}><circle cx="1174" cy="153.500" r="6.700" stroke="#1288c3" strokeDasharray="3.500 1.700" strokeWidth="1.500" /><g fill="#23313a"><circle cx="1174" cy="151" r="1.500" /><circle cx="1171.500" cy="155" r="1.500" /><circle cx="1176.500" cy="155" r="1.500" /></g></G>
        </div>
        <G x={1185} y={141} w={94} h={25}><rect x="1207.500" y="143.500" width="14" height="14" fill="#b3b3b3" stroke="#777" /><path d="M1219 149v12l3-3 2 5 2-1-2-4h4z" fill="#777" stroke="#eee" strokeWidth=".500" /></G>
      </div>
    </div>
  );
}

export default function App() {
  return (
    <div className="relative flex h-[720px] w-[1280px] flex-col overflow-hidden bg-[#d5d5d5] font-['Noto_Sans','Open_Sans',sans-serif]">
      <TitleBar /><Ribbon /><FeatureBar /><ViewWindow /><BottomBar /><StatusBar /><Taskbar /><SelectionPanel />
    </div>
  );
}
